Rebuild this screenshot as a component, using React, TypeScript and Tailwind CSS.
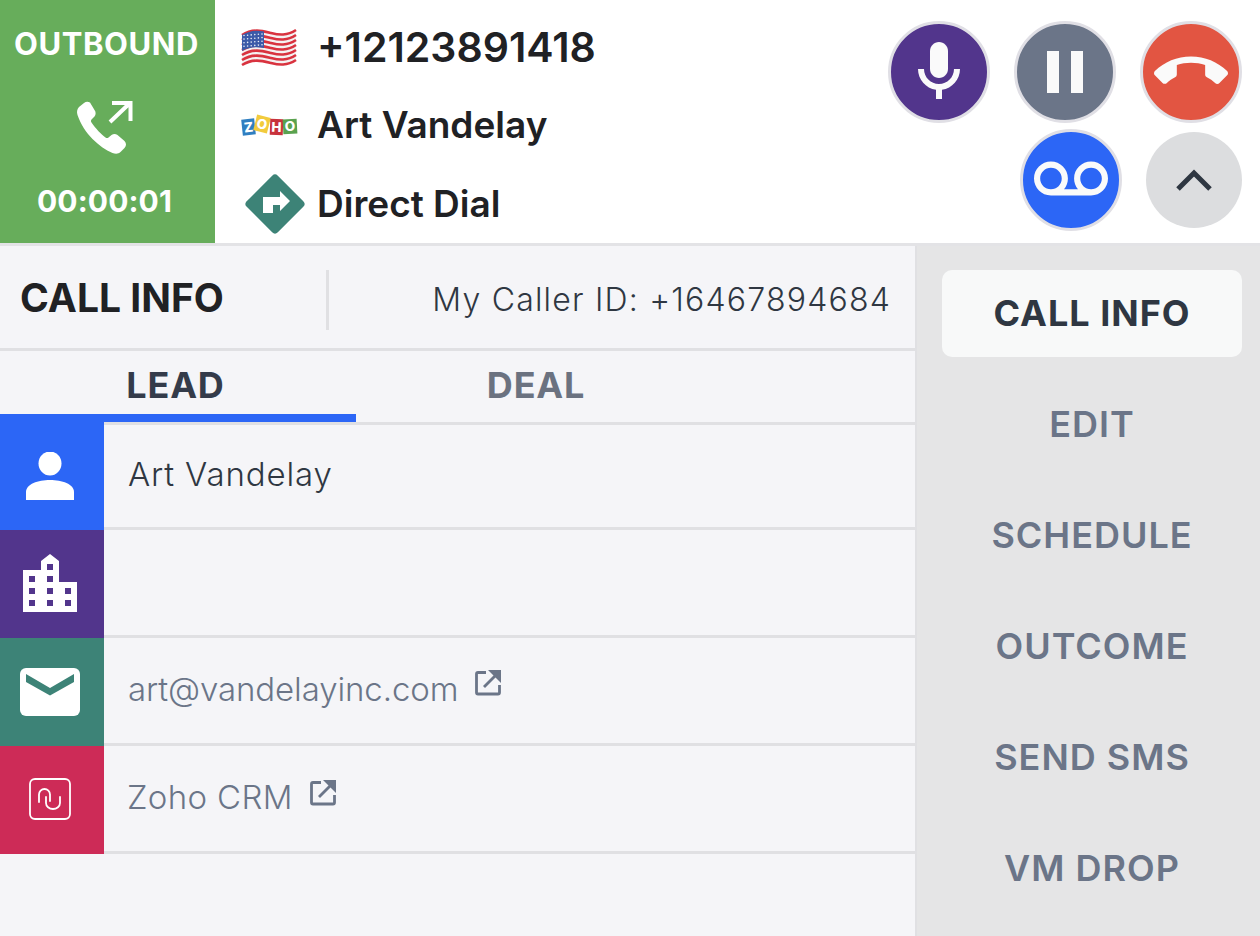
import type { ReactNode } from "react";

const font = { fontFamily: "Inter, 'Liberation Sans', sans-serif" };

function UsFlag() {
  const stripes = [0, 1, 2, 3, 4, 5, 6];
  return (
    <svg width="56" height="40" viewBox="0 0 56 40">
      <path d="M1 8C12 1 22 4 30 6s16 3 25-3v30c-9 6-17 5-25 3S12 31 1 38z" fill="#f4f1f1" />
      {stripes.map((i) => (
        <path
          key={i}
          d={`M1 ${8 + i * 5}C12 ${1 + i * 5} 22 ${4 + i * 5} 30 ${6 + i * 5}s16 3 25 -3`}
          fill="none"
          stroke="#d9333f"
          strokeWidth="2.6"
        />
      ))}
      <path d="M1 8C8 4 15 3 23 4.5V21C15 19.5 8 20 1 24z" fill="#3c5aa8" />
      {[0, 1, 2, 3].map((r) =>
        [0, 1, 2, 3, 4, 5].map((c) => (
          <circle key={`${r}-${c}`} cx={3 + c * 3.6} cy={8.5 + r * 3.6 - c * 0.3} r="0.8" fill="#e8ecf6" />
        ))
      )}
    </svg>
  );
}

function ZohoLogo() {
  const tiles = [
    { x: 1, y: 6, w: 13, h: 16, rot: -6, bg: "#2f7fc1", ch: "Z" },
    { x: 14, y: 3, w: 14, h: 16, rot: 14, bg: "#f2cb3d", ch: "O" },
    { x: 29, y: 6, w: 13, h: 16, rot: 2, bg: "#c8323c", ch: "H" },
    { x: 42, y: 6, w: 14, h: 15, rot: -3, bg: "#5aa24f", ch: "O" },
  ];
  return (
    <svg width="58" height="24" viewBox="0 0 58 24">
      {tiles.map((t) => (
        <g key={t.x} transform={`rotate(${t.rot} ${t.x + t.w / 2} ${t.y + t.h / 2})`}>
          <rect x={t.x} y={t.y} width={t.w} height={t.h} fill={t.bg} />
          <text
            x={t.x + t.w / 2}
            y={t.y + t.h - 3}
            textAnchor="middle"
            fontSize="13.5"
            fontWeight="800"
            fontFamily="Inter, sans-serif"
            fill="#fff"
          >
            {t.ch}
          </text>
        </g>
      ))}
    </svg>
  );
}

function DirectDialIcon() {
  return (
    <svg width="62" height="62" viewBox="0 0 62 62">
      <rect x="9" y="9" width="44" height="44" rx="4" transform="rotate(45 31 31)" fill="#3d8377" />
      <path d="M19 40V24h17v-6l10 10-10 10v-6H29v8z" fill="#fff" />
    </svg>
  );
}

function RoundButton({ bg, children }: { bg: string; children: ReactNode }) {
  return (
    <button className={`flex h-[102px] w-[102px] items-center justify-center rounded-full border-[3px] border-[#e0dfe5] ${bg}`}>
      {children}
    </button>
  );
}

function ExternalLink() {
  return (
    <svg width="26" height="26" viewBox="0 0 26 26" fill="none" stroke="#6b7588" strokeWidth="2.8">
      <path d="M11 2.5H3A1.500 1.500 0 0 0 1.500 4v18.500A1.500 1.500 0 0 0 3 24h20a1.500 1.500 0 0 0 1.500-1.500V15" />
      <path d="M9 17 21 5" />
      <path d="M13 0h13v13z" fill="#6b7588" stroke="none" />
    </svg>
  );
}

function InfoRow({ bg, icon, children }: { bg: string; icon: ReactNode; children?: ReactNode }) {
  return (
    <div className="flex h-[108px]">
      <div className={`flex w-[104px] shrink-0 items-center justify-center pr-[4px] ${bg}`}>{icon}</div>
      <div className="flex flex-1 items-start border-b-[3px] border-[#e0e0e3] pl-6 pt-[28px]">{children}</div>
    </div>
  );
}

const sideItems = ["EDIT", "SCHEDULE", "OUTCOME", "SEND SMS", "VM DROP"];

export default function App() {
  return (
    <div className="flex h-[936px] w-[1260px] flex-col overflow-hidden bg-white" style={font}>
      {/* Call header */}
      <div className="flex h-[246px] shrink-0 border-b-[3px] border-[#e3e3e6]">
        <div className="flex w-[215px] shrink-0 flex-col items-center bg-[#67ad5b] pt-[24px] text-white">
          <div className="pr-[2px] text-[31px] leading-[40px] font-bold tracking-[0.6px]">OUTBOUND</div>
          <svg className="mt-[37px]" width="64" height="56" viewBox="0 0 64 56">
            <path
              d="M14 1.500c-2-1-4-1-6 .5L3 6c-2 2-2.500 5-1.500 8 3 9 9 18 15 24s13 11 20 14c3 1 6 1 8-1l4-4c2-2 2-5 0-7l-7-6c-2-1.500-4-1.500-6 0l-3 2.500c-1 .7-2 .7-3 0-4-3-10-9-14-15-.7-1-.7-2 0-3l3-3c1.500-2 1.500-4.500 0-6.500z"
              fill="#fff"
            />
            <path d="M34 21 54 2M36 2h18.500v18" fill="none" stroke="#fff" strokeWidth="4" />
          </svg>
          <div className="mt-[24px] pr-[6px] text-[30px] leading-[40px] font-bold tracking-[0.1px]">00:00:01</div>
        </div>

        <div className="flex flex-1 flex-col pl-[26px] text-[#202124]">
          <div className="flex h-[94px] shrink-0 items-center">
            <UsFlag />
            <span className="ml-[20px] pt-[2px] text-[41px] font-semibold">+12123891418</span>
          </div>
          <div className="flex h-[62px] shrink-0 items-center">
            <ZohoLogo />
            <span className="ml-[18px] text-[37px] font-semibold">Art Vandelay</span>
          </div>
          <div className="flex h-[87px] shrink-0 items-center pt-[9px]">
            <div className="ml-[3px]">
              <DirectDialIcon />
            </div>
            <span className="ml-[11px] text-[37px] font-semibold">Direct Dial</span>
          </div>
        </div>

        <div className="flex flex-col items-end gap-[6px] pt-[21px] pr-[18px]">
          <div className="flex gap-[24px]">
            <RoundButton bg="bg-[#52358c]">
              <svg width="72" height="72" viewBox="0 0 24 24" fill="#fafafa">
                <path d="M12 14c1.660 0 3-1.340 3-3V5c0-1.660-1.340-3-3-3S9 3.340 9 5v6c0 1.660 1.340 3 3 3z" />
                <path d="M17 11c0 2.760-2.240 5-5 5s-5-2.240-5-5H5c0 3.530 2.610 6.430 6 6.920V21h2v-3.080c3.390-.49 6-3.390 6-6.920h-2z" />
              </svg>
            </RoundButton>
            <RoundButton bg="bg-[#6b7588]">
              <div className="flex gap-[12px]">
                <div className="h-[42px] w-[12px] bg-[#fafafa]" />
                <div className="h-[42px] w-[12px] bg-[#fafafa]" />
              </div>
            </RoundButton>
            <RoundButton bg="bg-[#e25542]">
              <svg width="74" height="74" viewBox="0 0 24 24" fill="#fafafa">
                <path d="M12 9c-1.600 0-3.150.25-4.600.72v3.100c0 .39-.23.74-.56.9-.98.49-1.870 1.120-2.660 1.850-.18.18-.43.28-.7.28-.28 0-.53-.11-.71-.29L.29 13.080c-.18-.17-.29-.42-.29-.7 0-.28.11-.53.29-.71C3.340 8.780 7.460 7 12 7s8.660 1.780 11.710 4.670c.18.18.29.43.29.71 0 .28-.11.53-.29.71l-2.480 2.480c-.18.18-.43.29-.71.29-.27 0-.52-.11-.7-.28-.79-.74-1.690-1.360-2.670-1.850-.33-.16-.56-.5-.56-.9v-3.100C15.150 9.250 13.600 9 12 9z" />
              </svg>
            </RoundButton>
          </div>
          <div className="flex items-center gap-[24px]">
            <RoundButton bg="bg-[#2c66f6]">
              <svg width="74" height="74" viewBox="0 0 24 24" fill="#fafafa">
                <path d="M18.500 6C15.460 6 13 8.460 13 11.500c0 1.330.47 2.550 1.260 3.500H9.740c.79-.95 1.260-2.170 1.260-3.500C11 8.460 8.540 6 5.500 6S0 8.460 0 11.500 2.460 17 5.500 17h13c3.040 0 5.500-2.460 5.500-5.500S21.540 6 18.500 6zm-13 9C3.570 15 2 13.430 2 11.500S3.570 8 5.500 8 9 9.570 9 11.500 7.430 15 5.500 15zm13 0c-1.930 0-3.500-1.570-3.500-3.500S16.570 8 18.500 8 22 9.570 22 11.500 20.430 15 18.500 15z" />
              </svg>
            </RoundButton>
            <button className="flex h-[96px] w-[96px] items-center justify-center rounded-full bg-[#dcdddf]">
              <svg width="36" height="22" viewBox="0 0 36 22" fill="none" stroke="#2f3742" strokeWidth="5">
                <path d="M2 20 18 4l16 16" />
              </svg>
            </button>
          </div>
        </div>
      </div>

      <div className="flex flex-1">
        {/* Main panel */}
        <div className="flex w-[917px] shrink-0 flex-col border-r-[2px] border-[#e0e0e3] bg-[#f5f5f8]">
          <div className="flex h-[105px] shrink-0 items-center border-b-[3px] border-[#e0e0e3]">
            <div className="mt-[5px] h-[60px] w-[329px] shrink-0 border-r-[3px] border-[#e0e0e3] pl-[20px]">
              <div className="-mt-[2px] text-[39px] leading-[60px] font-bold text-[#202124]">CALL INFO</div>
            </div>
            <div className="mt-[5px] flex-1 pr-[24px] text-right text-[32px] font-light tracking-[1.2px] text-[#2f3742]">
              My Caller ID: +16467894684
            </div>
          </div>

          <div className="flex h-[63px] shrink-0">
            <div className="flex w-[356px] items-center justify-center pt-[5px] pr-[5px] text-[36px] font-bold tracking-[0.8px] text-[#343b4a]">
              LEAD
            </div>
            <div className="flex w-[360px] items-center justify-center pt-[5px] text-[36px] font-bold tracking-[0.8px] text-[#6b7280]">
              DEAL
            </div>
          </div>
          <div className="flex h-[11px] shrink-0 flex-col">
            <div className="h-[8px] w-[356px] bg-[#2c66f6]" />
            <div className="h-[3px] bg-[#e0e0e3]" />
          </div>

          <div className="-mt-[11px] flex flex-col">
            <div className="flex h-[116px]">
              <div className="flex w-[104px] shrink-0 items-center justify-center bg-[#2c66f6] pt-[8px] pr-[4px]">
                <svg width="48" height="48" viewBox="0 0 48 48" fill="#fff">
                  <ellipse cx="24" cy="11.500" rx="11.500" ry="12" />
                  <path d="M0 48v-8c0-8 12-12 24-12s24 4 24 12v8z" />
                </svg>
              </div>
              <div className="mt-[11px] flex flex-1 items-start border-b-[3px] border-[#e0e0e3] pl-[24px] pt-[29px] text-[33px] leading-[40px] font-light tracking-[0.85px] text-[#2f3742]">
                Art Vandelay
              </div>
            </div>
            <InfoRow
              bg="bg-[#52358c]"
              icon={
                <svg className="mb-[3px]" width="54" height="58" viewBox="0 0 54 58" fill="#fff" fillRule="evenodd">
                  <path d="M0 58V16h18V7L27 0l9 7v21h18v30zM24 10v6h6v-6zM6 22v6h6v-6zm18 0v6h6v-6zM6 34v6h6v-6zm18 0v6h6v-6zm18 0v6h6v-6zM6 46v6h6v-6zm18 0v6h6v-6zm18 0v6h6v-6z" />
                </svg>
              }
            />
            <InfoRow
              bg="bg-[#3d8377]"
              icon={
                <svg width="60" height="48" viewBox="0 0 60 48">
                  <rect width="60" height="48" rx="6" fill="#fff" />
                  <path d="M6 6v8l24 13.500L54 14V6L30 20z" fill="#3d8377" />
                </svg>
              }
            >
              <span className="text-[33px] leading-[46px] font-light tracking-[-0.1px] text-[#6b7588]">art@vandelayinc.com</span>
              <span className="mt-[4px] ml-[17px]">
                <ExternalLink />
              </span>
            </InfoRow>
            <InfoRow
              bg="bg-[#cd2b57]"
              icon={
                <svg className="mb-[2px]" width="42" height="42" viewBox="0 0 42 42" fill="none" stroke="#fff" strokeWidth="1.800" strokeLinecap="round">
                  <rect x="1" y="1" width="40" height="40" rx="5" />
                  <path d="M10 24V16.500a5.500 5.500 0 0 1 11 0V23" />
                  <path d="M17 19v6a7 6 0 0 0 14 0V19" />
                </svg>
              }
            >
              <span className="-ml-[1px] text-[33px] leading-[46px] font-light tracking-[0.35px] text-[#6b7588]">Zoho CRM</span>
              <span className="mt-[6px] ml-[17px]">
                <ExternalLink />
              </span>
            </InfoRow>
          </div>
        </div>

        {/* Side nav */}
        <div className="flex flex-1 flex-col gap-[24px] bg-[#e5e5e6] pt-[24px] pl-[25px] pr-[18px]">
          <button className="h-[87px] rounded-[10px] bg-[#f8f9f9] pb-[2px] text-[36px] font-bold tracking-[1px] text-[#2f3742]">CALL INFO</button>
          {sideItems.map((item) => (
            <button key={item} className="h-[87px] pb-[2px] text-[36px] font-semibold tracking-[1px] text-[#6b7588]">
              {item}
            </button>
          ))}
        </div>
      </div>
    </div>
  );
}
